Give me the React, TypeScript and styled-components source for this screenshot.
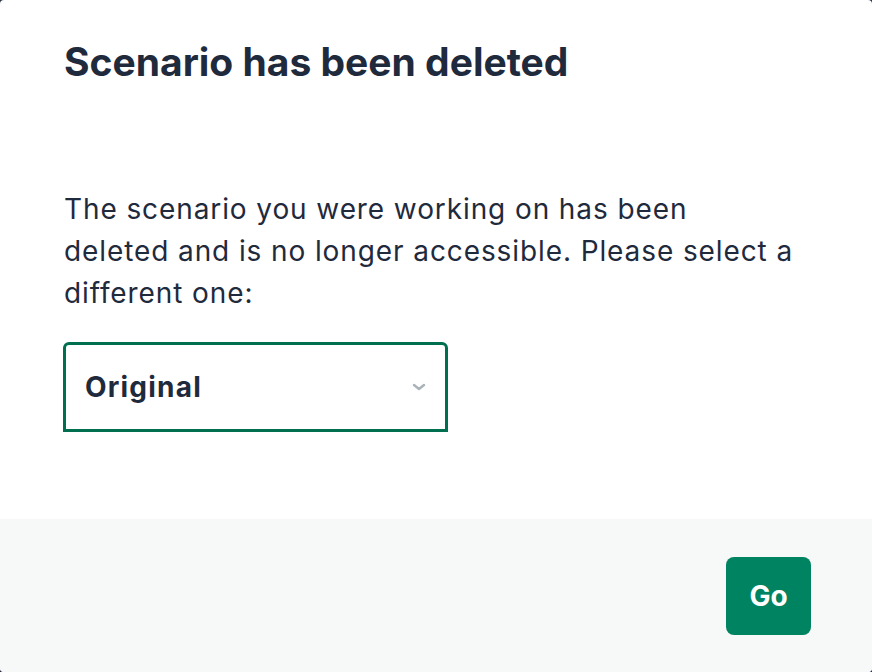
import styled, { createGlobalStyle } from "styled-components";

const GlobalStyle = createGlobalStyle`
  html, body {
    margin: 0;
    padding: 0;
    background: #2a3140;
  }
  body {
    font-family: Inter, "Noto Sans", sans-serif;
    color: #1f2a3d;
  }
`;

function Chevron() {
  return (
    <svg width="16" height="10" viewBox="0 0 16 10" fill="none">
      <path
        d="M3 3l5 4 5-4"
        stroke="#a9b3b8"
        strokeWidth="2.4"
        strokeLinecap="round"
        strokeLinejoin="round"
      />
    </svg>
  );
}

export default function App() {
  return (
    <>
      <GlobalStyle />
      <Dialog>
        <Body>
          <Title>Scenario has been deleted</Title>
          <Message>
            The scenario you were working on has been
            <br />
            deleted and is no longer accessible. Please select a
            <br />
            different one:
          </Message>
          <Select>
            <span>Original</span>
            <Chevron />
          </Select>
        </Body>
        <Footer>
          <GoButton>Go</GoButton>
        </Footer>
      </Dialog>
    </>
  );
}

const Dialog = styled.div`
  width: 872px;
  height: 672px;
  background: #fff;
  border-radius: 4px;
  overflow: hidden;
  display: flex;
  flex-direction: column;
`;

const Body = styled.div`
  flex: 1;
  padding: 38px 64px 0;
  display: flex;
  flex-direction: column;
`;

const Title = styled.h1`
  margin: 0;
  font-size: 39px;
  line-height: 48px;
  font-weight: 700;
  color: #1f2a3d;
`;

const Message = styled.p`
  margin: 102px 0 0;
  font-size: 28px;
  line-height: 42px;
  font-weight: 400;
  letter-spacing: 0.9px;
  white-space: nowrap;
  color: #1f2a3d;
`;

const Select = styled.div`
  margin: 28px 0 0 -1px;
  width: 385px;
  height: 90px;
  box-sizing: border-box;
  border: 3px solid #006f4f;
  border-radius: 6px 6px 0 0;
  padding: 0 18px 0 19px;
  display: flex;
  align-items: center;
  justify-content: space-between;
  font-size: 28px;
  font-weight: 700;
  letter-spacing: 1.2px;
  color: #1f2a3d;
`;

const Footer = styled.div`
  height: 153px;
  background: #f7f8f8;
  display: flex;
  align-items: flex-start;
  justify-content: flex-end;
  padding: 38px 61px 0 0;
  box-sizing: border-box;
`;

const GoButton = styled.button`
  width: 85px;
  height: 78px;
  border: none;
  border-radius: 8px;
  background: #008361;
  color: #fff;
  font-family: inherit;
  font-size: 28px;
  font-weight: 700;
  cursor: pointer;
`;
